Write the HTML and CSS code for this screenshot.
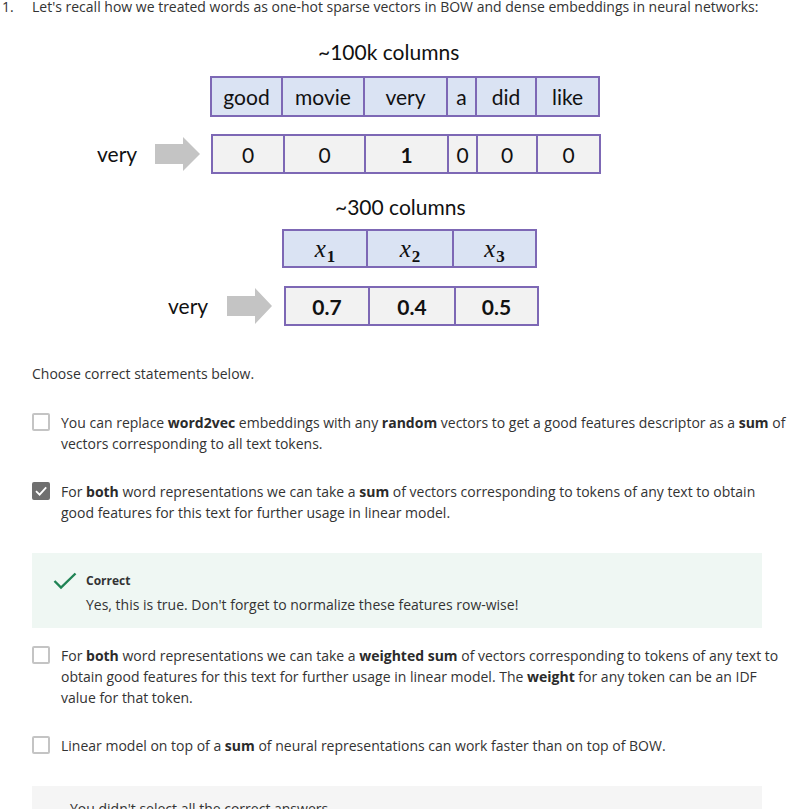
FILE: index.html
```html
<!DOCTYPE html>
<html>
<head>
<meta charset="utf-8">
<link rel="stylesheet" href="styles.css">
</head>
<body>
<div class="page">
  <div class="question">
    <span class="qnum">1.</span>
    <span class="qtext">Let's recall how we treated words as one-hot sparse vectors in BOW and dense embeddings in neural networks:</span>
  </div>

  <div class="diagram">
    <div class="dtitle t1">~100k columns</div>
    <div class="drow r1">
      <div class="vec head">
        <div class="cell" style="width:71px">good</div>
        <div class="cell" style="width:82px">movie</div>
        <div class="cell" style="width:83px">very</div>
        <div class="cell" style="width:29px">a</div>
        <div class="cell" style="width:60px">did</div>
        <div class="cell" style="width:63px">like</div>
      </div>
    </div>
    <div class="drow r2">
      <span class="word">very</span>
      <svg class="arrow" width="45" height="34" viewBox="0 0 45 34"><path d="M0 7 H28 V0 L45 17 L28 34 V27 H0 Z" fill="#c4c4c4"/></svg>
      <div class="vec vals">
        <div class="cell" style="width:72px">0</div>
        <div class="cell" style="width:81px">0</div>
        <div class="cell bold" style="width:83px">1</div>
        <div class="cell" style="width:29px">0</div>
        <div class="cell" style="width:60px">0</div>
        <div class="cell" style="width:63px">0</div>
      </div>
    </div>
    <div class="dtitle t2">~300 columns</div>
    <div class="drow r3">
      <div class="vec head small">
        <div class="cell" style="width:84px"><span class="math"><i>x</i><sub>1</sub></span></div>
        <div class="cell" style="width:86px"><span class="math"><i>x</i><sub>2</sub></span></div>
        <div class="cell" style="width:83px"><span class="math"><i>x</i><sub>3</sub></span></div>
      </div>
    </div>
    <div class="drow r4">
      <span class="word">very</span>
      <svg class="arrow" width="45" height="36" viewBox="0 0 45 36"><path d="M0 8 H28 V0 L45 18 L28 36 V28 H0 Z" fill="#c4c4c4"/></svg>
      <div class="vec vals">
        <div class="cell bold" style="width:84px">0.7</div>
        <div class="cell bold" style="width:86px">0.4</div>
        <div class="cell bold" style="width:83px">0.5</div>
      </div>
    </div>
  </div>

  <p class="prompt">Choose correct statements below.</p>

  <div class="option o1">
    <span class="box"></span>
    <div class="otext">You can replace <b>word2vec</b> embeddings with any <b>random</b> vectors to get a good features descriptor as a <b>sum</b> of vectors corresponding to all text tokens.</div>
  </div>

  <div class="option o2">
    <span class="box checked"><svg width="18" height="18" viewBox="0 0 18 18"><path d="M4 9.2 L7.6 12.6 L14.2 5.4" fill="none" stroke="#fff" stroke-width="1.8"/></svg></span>
    <div class="otext">For <b>both</b> word representations we can take a <b>sum</b> of vectors corresponding to tokens of any text to obtain good features for this text for further usage in linear model.</div>
  </div>

  <div class="feedback">
    <svg class="ficon" width="24" height="18" viewBox="0 0 24 18"><path d="M1.5 9 L8 15.5 L22.5 1.5" fill="none" stroke="#1f8354" stroke-width="2.4"/></svg>
    <div class="fbody">
      <div class="ftitle">Correct</div>
      <div class="ftext">Yes, this is true. Don't forget to normalize these features row-wise!</div>
    </div>
  </div>

  <div class="option o3">
    <span class="box"></span>
    <div class="otext">For <b>both</b> word representations we can take a <b>weighted sum</b> of vectors corresponding to tokens of any text to obtain good features for this text for further usage in linear model. The <b>weight</b> for any token can be an IDF value for that token.</div>
  </div>

  <div class="option o4">
    <span class="box"></span>
    <div class="otext">Linear model on top of a <b>sum</b> of neural representations can work faster than on top of BOW.</div>
  </div>

  <div class="missed">
    <div class="mtext">You didn't select all the correct answers</div>
  </div>
</div>
</body>
</html>
```

FILE: styles.css
```css
html, body {
  margin: 0;
  padding: 0;
  background: #fff;
  overflow: hidden;
}
.page {
  width: 791px;
  height: 809px;
  overflow: hidden;
  font-family: "Open Sans", "DejaVu Sans", sans-serif;
  font-size: 14px;
  line-height: 21px;
  color: #333;
}
.question {
  display: flex;
  margin-top: -4px;
}
.qnum {
  width: 32px;
  padding-left: 2px;
  box-sizing: border-box;
  flex: none;
}
.qtext {
  flex: 1;
}

.diagram {
  font-family: Lato, "Open Sans", sans-serif;
  color: #111;
}
.dtitle {
  font-size: 21px;
  line-height: 26px;
}
.t1 {
  margin-top: 22px;
  padding-left: 318px;
}
.t2 {
  margin-top: 20px;
  padding-left: 335px;
}
.drow {
  display: flex;
  align-items: center;
}
.r1 {
  margin-top: 11px;
  padding-left: 210px;
}
.r2 {
  margin-top: 17px;
  padding-left: 97px;
}
.r3 {
  margin-top: 9px;
  padding-left: 282px;
}
.r4 {
  margin-top: 18px;
  padding-left: 168px;
}
.word {
  font-size: 21px;
  width: 44px;
  line-height: 26px;
}
.r2 .arrow {
  margin-left: 14px;
  margin-right: 11px;
}
.r4 .arrow {
  margin-left: 15px;
  margin-right: 12px;
}
.vec {
  display: flex;
  border: 2px solid #7d68b5;
  border-left: none;
  height: 41px;
  box-sizing: border-box;
}
.vec.vals {
  height: 40px;
}
.vec.small {
  height: 39px;
}
.cell {
  box-sizing: border-box;
  border-left: 2px solid #7d68b5;
  display: flex;
  align-items: center;
  justify-content: center;
  font-size: 21px;
}
.head .cell {
  background: #dae3f3;
}
.vals .cell {
  background: #f2f2f2;
}
.bold {
  font-weight: bold;
}
.math {
  font-family: "Liberation Serif", "DejaVu Serif", serif;
  font-size: 25px;
  line-height: 24px;
  display: inline-block;
}
.math i {
  font-style: italic;
}
.math sub {
  font-family: "Liberation Serif", serif;
  font-size: 17px;
  font-weight: bold;
  vertical-align: -5px;
  line-height: 0;
  margin-left: 1px;
}

.prompt {
  margin: 37px 0 0 32px;
}
.option {
  display: flex;
  align-items: flex-start;
  padding-left: 32px;
  width: 757px;
}
.o1 { margin-top: 28px; }
.o2 { margin-top: 27px; }
.o3 { margin-top: 17px; }
.o4 { margin-top: 27px; }
.box {
  flex: none;
  width: 18px;
  height: 18px;
  box-sizing: border-box;
  border: 2px solid #c4c4c4;
  border-radius: 2px;
  margin-top: 1px;
  margin-right: 11px;
  background: #fff;
}
.box.checked {
  background: #6f6f6f;
  border-color: #6f6f6f;
  position: relative;
}
.box.checked svg {
  position: absolute;
  left: -2px;
  top: -2px;
}
.otext {
  flex: 1;
}
.otext b {
  font-weight: bold;
  color: #2b2b2b;
}

.feedback {
  margin: 30px 0 0 32px;
  width: 730px;
  background: #eff7f3;
  display: flex;
  padding: 19px 0 13px 21px;
  box-sizing: border-box;
}
.ficon {
  flex: none;
  margin-top: 0;
  margin-right: 9px;
}
.ftitle {
  font-size: 12px;
  line-height: 18px;
  font-weight: bold;
}
.ftext {
  margin-top: 4px;
}

.missed {
  margin: 30px 0 0 32px;
  width: 730px;
  height: 60px;
  background: #f5f5f5;
  padding: 12px 0 0 38px;
  box-sizing: border-box;
}
.mtext {
  color: #333;
}
```
